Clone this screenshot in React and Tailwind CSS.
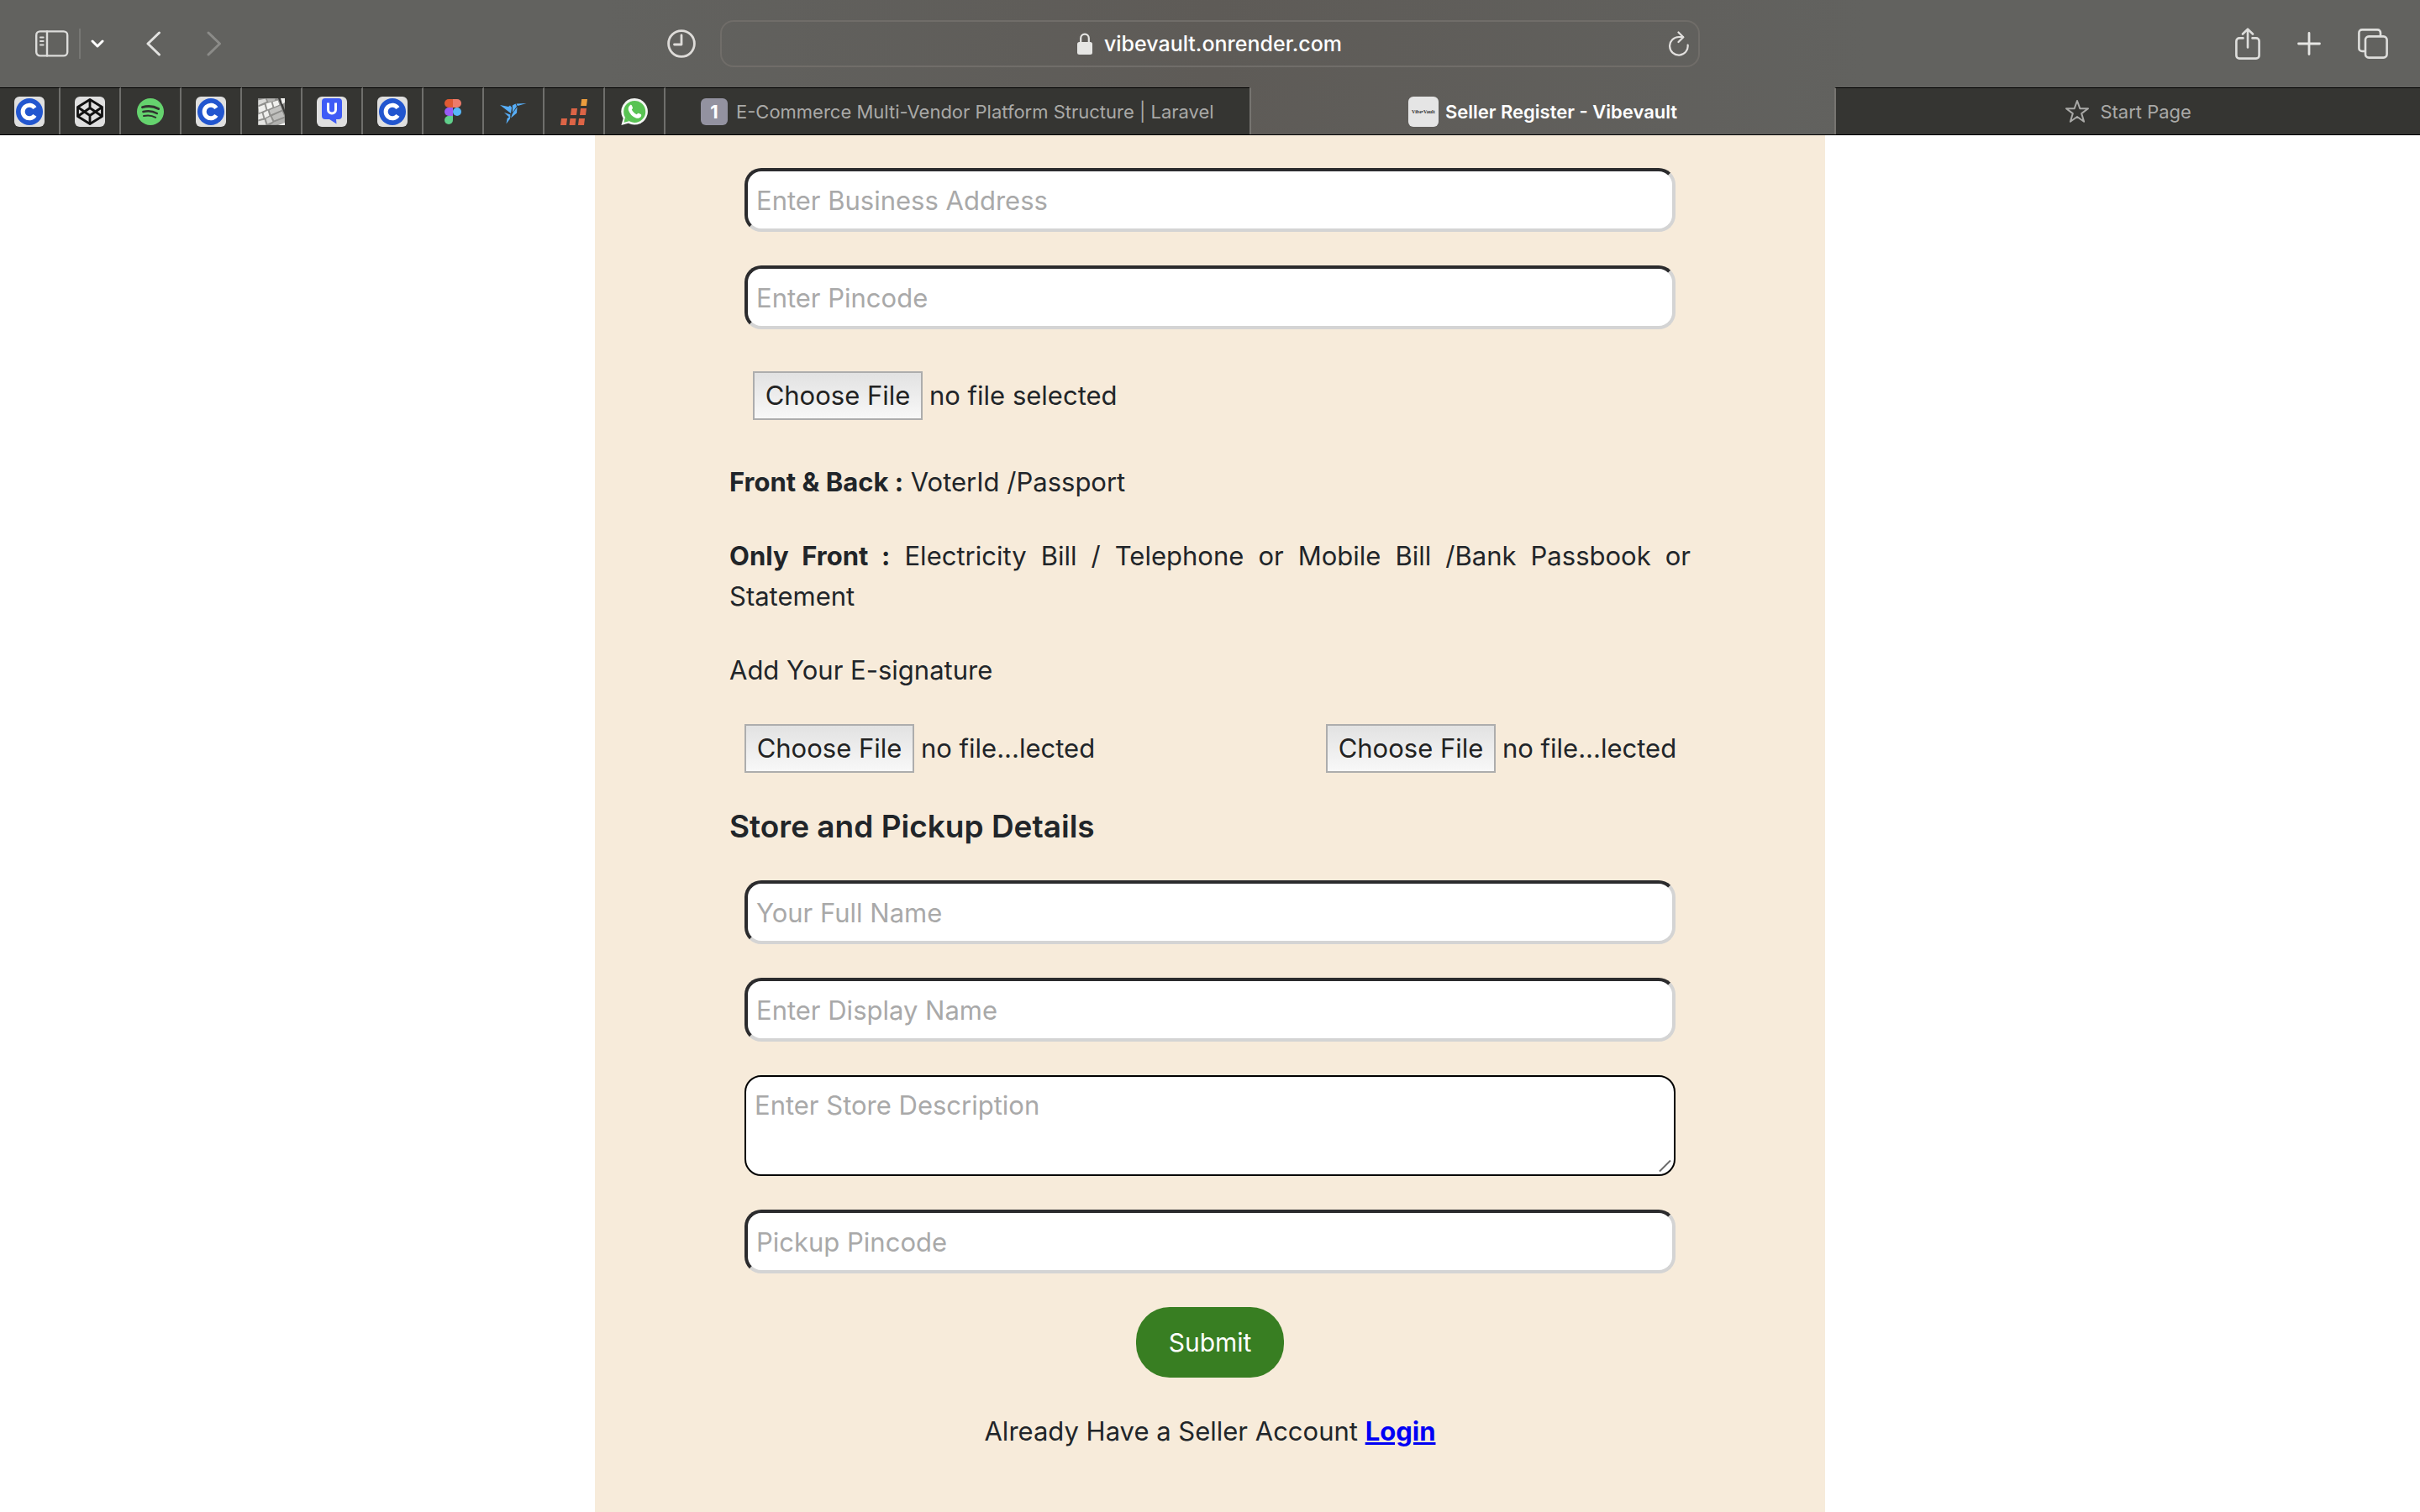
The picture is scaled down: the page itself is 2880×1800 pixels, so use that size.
import React from "react";

function CoinIcon() {
  return (
    <svg viewBox="0 0 36 36" className="size-9" aria-hidden="true">
      <rect width="36" height="36" rx="6" fill="#dfdfdf" />
      <circle cx="18" cy="18" r="16" fill="#2256cf" />
      <path d="M24.4 13.6A7.8 7.8 0 1 0 24.4 22.4" fill="none" stroke="#fff" strokeWidth="5" />
    </svg>
  );
}

function CodepenIcon() {
  return (
    <svg viewBox="0 0 36 36" className="size-9" aria-hidden="true">
      <rect width="36" height="36" rx="6" fill="#dfdfdf" />
      <g fill="none" stroke="#111" strokeWidth="2.8" strokeLinejoin="round">
        <path d="M18 3.5 32.5 12.5V23.5L18 32.5 3.5 23.5V12.5Z" />
        <path d="M3.5 12.5 18 22.5 32.5 12.5M3.5 23.5 18 13.5 32.5 23.5M18 3.5V13.5M18 22.5V32.5" />
      </g>
    </svg>
  );
}

function SpotifyIcon() {
  return (
    <svg viewBox="0 0 32 32" className="size-8" aria-hidden="true">
      <circle cx="16" cy="16" r="16" fill="#65d36e" />
      <g fill="none" stroke="#30332f" strokeLinecap="round">
        <path d="M6.5 10.6C13 8.8 20 9.4 25.6 12.5" strokeWidth="3" />
        <path d="M7.4 16C13 14.6 19 15.2 23.8 18" strokeWidth="2.5" />
        <path d="M8 21C13 19.9 18 20.4 22.2 22.8" strokeWidth="2" />
      </g>
    </svg>
  );
}

function KeyboardIcon() {
  return (
    <svg viewBox="0 0 32 32" className="size-8" aria-hidden="true">
      <rect width="32" height="32" fill="#8d8d8b" />
      <g stroke="#8a8a88" strokeWidth="0.8">
        <path d="M0 2 9 0 11 4 0 9Z" fill="#d9d9d7" />
        <path d="M10 0H21L20 4 12 5Z" fill="#b5b5b3" />
        <path d="M0 10 8 7 10 14 1 18Z" fill="#efefed" />
        <path d="M9 6 16 4 18 11 11 14Z" fill="#f4f4f2" />
        <path d="M17 4 24 2 26 8 19 11Z" fill="#f0f0ee" />
        <path d="M0 19 5 17 7 24 0 26Z" fill="#ececea" />
        <path d="M6 17 12 14 14 21 8 24Z" fill="#efefed" />
        <path d="M13 14 27 8 29 14 15 20Z" fill="#c2c2c0" />
        <path d="M0 27 8 25 10 32H0Z" fill="#e4e4e2" />
        <path d="M9 24 15 21 18 28 11 31Z" fill="#d2d2d0" />
        <path d="M16 21 29 15 32 22 19 27Z" fill="#bebebc" />
        <path d="M19 28 32 23V30L21 32H14Z" fill="#b0b0ae" />
      </g>
      <path d="M24 0H27L32 14V20Z" fill="#3a3a39" />
      <path d="M27 0H32V5L29 7Z" fill="#f2f2f0" />
      <path d="M24 32 32 29V32Z" fill="#f2f2f0" />
    </svg>
  );
}

function BubbleIcon() {
  return (
    <svg viewBox="0 0 36 36" className="size-9" aria-hidden="true">
      <rect width="36" height="36" rx="6" fill="#dfdfdf" />
      <path d="M10 2H26A4 4 0 0 1 30 6V23A4 4 0 0 1 26 27H23L23.5 32.5 15 27H10A4 4 0 0 1 6 23V6A4 4 0 0 1 10 2Z" fill="#3e5bf6" />
      <path d="M13.5 7.5V15.5A4.5 4.5 0 0 0 22.5 15.5V7.5" fill="none" stroke="#fff" strokeWidth="3" />
    </svg>
  );
}

function FigmaIcon() {
  return (
    <svg viewBox="0 0 20 30" className="h-[30px] w-5" aria-hidden="true">
      <path d="M5 0H10V10H5A5 5 0 0 1 5 0Z" fill="#e05a33" />
      <path d="M10 0H15A5 5 0 0 1 15 10H10Z" fill="#ee7b6a" />
      <path d="M5 10H10V20H5A5 5 0 0 1 5 10Z" fill="#985cf6" />
      <circle cx="15" cy="15" r="5" fill="#57b7f9" />
      <path d="M5 20H10V25A5 5 0 1 1 5 20Z" fill="#60cf8b" />
    </svg>
  );
}

function BirdIcon() {
  return (
    <svg viewBox="0 0 32 32" className="size-8" aria-hidden="true">
      <g fill="#57aef8">
        <path d="M0 8 10 10 12 8.5 14 11 13 18Z" />
        <path d="M5 17 12.5 19.5 11.5 23Z" />
        <path d="M14.8 8.6 18.5 6.5 20 9.5 15 17Z" />
        <path d="M19.5 6.5 31.5 6 22 8.8 20.8 9Z" />
        <path d="M20.5 10.2 20 17.5 13 23.5 14.8 18.6Z" />
        <path d="M12.6 21 11.8 24.8 7.4 30.5 8.6 24Z" />
      </g>
    </svg>
  );
}

function BlocksIcon() {
  return (
    <svg viewBox="0 0 32 32" className="size-8" aria-hidden="true">
      <path d="M25.2 1H32L31 9H24.2Z" fill="#eb9c3d" />
      <g fill="#dd6446">
        <path d="M13 12H20L19 20H12Z" />
        <path d="M24 12H31L30 20H23Z" />
        <path d="M1 24H8L7 32H0Z" />
        <path d="M11.5 24H18.5L17.5 32H10.5Z" />
        <path d="M22 24H29L28 32H21Z" />
      </g>
    </svg>
  );
}

function WhatsappIcon() {
  return (
    <svg viewBox="0 0 32 32" className="size-8" aria-hidden="true">
      <path d="M16.2 0A15.8 15.8 0 1 1 8.8 29.8L0.4 32 2.6 23.9A15.8 15.8 0 0 1 16.2 0Z" fill="#f3f5f2" />
      <circle cx="16.2" cy="15.9" r="13" fill="#59c353" />
      <path d="M3.6 28.8 5 22.5 9.5 27.2Z" fill="#59c353" />
      <path d="M10.8 8.2C11.5 7.6 12.5 7.7 12.9 8.5L14 11.2C14.3 11.9 13.2 13 12.8 13.5 14 16 16 18 18.8 19.2 19.4 18.6 20.3 17.4 20.9 17.7L23.6 19C24.6 19.6 24.2 21 23.6 22 22.4 23.6 20 24.2 17.8 23.4 13.6 22 10.4 18.6 9 14.6 8.3 12.2 9 9.6 10.8 8.2Z" fill="#fff" />
    </svg>
  );
}

const pinned = [
  ["Courses", CoinIcon],
  ["CodePen", CodepenIcon],
  ["Spotify", SpotifyIcon],
  ["Courses", CoinIcon],
  ["Typing", KeyboardIcon],
  ["Bubble", BubbleIcon],
  ["Courses", CoinIcon],
  ["Figma", FigmaIcon],
  ["Bird", BirdIcon],
  ["Blocks", BlocksIcon],
  ["WhatsApp", WhatsappIcon],
];

function Toolbar() {
  return (
    <div className="grid h-[104px] grid-cols-[1fr_1166px_1fr] items-center">
      <div className="flex items-center justify-between pr-[29px] pl-[42px]">
        <div className="flex items-center">
          <button type="button" aria-label="Sidebar">
            <svg viewBox="0 0 40 32" className="h-8 w-10" fill="none" stroke="#dcdcda" strokeWidth="2.4" strokeLinecap="round">
              <rect x="1.2" y="1.4" width="37" height="29" rx="4.5" />
              <path d="M14 1.4V30.4" />
              <path d="M6 8.5H9.6M6 13H9.6M6 17.5H9.6" strokeWidth="2" />
            </svg>
          </button>
          <span className="ml-3 h-9 w-0.5 bg-[#777774]" />
          <button type="button" aria-label="Sidebar menu" className="ml-3">
            <svg viewBox="0 0 16 10" className="h-2.5 w-4" fill="none" stroke="#fff" strokeWidth="3" strokeLinecap="round" strokeLinejoin="round">
              <path d="M2 2 8 8 14 2" />
            </svg>
          </button>
          <button type="button" aria-label="Back" className="ml-[50px]">
            <svg viewBox="0 0 18 30" className="h-[30px] w-[18px]" fill="none" stroke="#e2e2e0" strokeWidth="3" strokeLinecap="round" strokeLinejoin="round">
              <path d="M15.5 2 2 15 15.5 28" />
            </svg>
          </button>
          <button type="button" aria-label="Forward" className="ml-[54px]">
            <svg viewBox="0 0 18 30" className="h-[30px] w-[18px]" fill="none" stroke="#8b8b88" strokeWidth="3" strokeLinecap="round" strokeLinejoin="round">
              <path d="M2 2 15.5 15 2 28" />
            </svg>
          </button>
        </div>
        <button type="button" aria-label="History">
          <svg viewBox="0 0 34 34" className="size-[34px]" fill="none" stroke="#dedcd9" strokeWidth="2.8" strokeLinecap="round" strokeLinejoin="round">
            <circle cx="17" cy="17" r="15.4" />
            <path d="M17 7V18H8.5" />
          </svg>
        </button>
      </div>
      <div className="flex h-14 items-center rounded-2xl border-2 border-[#706d69] pr-[11px]">
        <span className="w-[34px]" />
        <div className="flex flex-1 items-center justify-center gap-[14px] text-[25px] leading-8 font-medium text-white">
          <svg viewBox="0 0 18 26" className="h-[26px] w-[18px]" aria-hidden="true">
            <path d="M4.2 12V6.5A4.8 4.8 0 0 1 13.8 6.5V12" fill="none" stroke="#e6e6e4" strokeWidth="2.2" />
            <rect y="11" width="18" height="15" rx="2.5" fill="#e6e6e4" />
          </svg>
          <span>vibevault.onrender.com</span>
        </div>
        <button type="button" aria-label="Reload">
          <svg viewBox="0 0 24 30" className="h-[30px] w-6" fill="none" stroke="#e2e0de" strokeWidth="2.2" strokeLinecap="round" strokeLinejoin="round">
            <path d="M22.6 16.5A10.8 10.8 0 1 1 12 7H17" />
            <path d="M11.5 1.5 17.3 7.2 11.5 13" />
          </svg>
        </button>
      </div>
      <div className="flex items-center justify-end pr-[38px]">
        <button type="button" aria-label="Share">
          <svg viewBox="0 0 30 38" className="h-[38px] w-[30px]" fill="none" stroke="#dededc" strokeWidth="2.6" strokeLinecap="round" strokeLinejoin="round">
            <path d="M9.5 12.4H5A3.6 3.6 0 0 0 1.4 16V33A3.6 3.6 0 0 0 5 36.6H25A3.6 3.6 0 0 0 28.6 33V16A3.6 3.6 0 0 0 25 12.4H20.5" />
            <path d="M15 23.5V1.8M9 7.5 15 1.6 21 7.5" />
          </svg>
        </button>
        <button type="button" aria-label="New tab" className="ml-11">
          <svg viewBox="0 0 28 28" className="size-7" fill="none" stroke="#e6e6e4" strokeWidth="2.8" strokeLinecap="round">
            <path d="M14 1.5V26.5M1.5 14H26.5" />
          </svg>
        </button>
        <button type="button" aria-label="Tab overview" className="ml-11">
          <svg viewBox="0 0 36 36" className="size-9" fill="none" stroke="#dededc" strokeWidth="2.6" strokeLinejoin="round">
            <rect x="9" y="9.4" width="25.6" height="25.2" rx="4" />
            <path d="M9 27H5A3.6 3.6 0 0 1 1.4 23.4V5A3.6 3.6 0 0 1 5 1.4H23.4A3.6 3.6 0 0 1 27 5V9.4" />
          </svg>
        </button>
      </div>
    </div>
  );
}

function TabBar() {
  return (
    <div className="flex h-14 text-[22px] leading-7">
      {pinned.map(([label, Icon], i) => (
        <button
          key={i}
          type="button"
          aria-label={label}
          className="flex w-[72px] shrink-0 items-center justify-center border-t border-r-2 border-t-black border-r-[#6f6f6c] bg-[#353532]"
        >
          <Icon />
        </button>
      ))}
      <button type="button" className="flex flex-1 items-center justify-center gap-2.5 border-t border-black bg-[#353532] text-[#a9a9a7]">
        <span className="flex size-8 items-center justify-center rounded-md bg-[#9392a0] font-bold text-white">1</span>
        <span>E-Commerce Multi-Vendor Platform Structure | Laravel</span>
      </button>
      <button type="button" className="flex flex-1 items-center justify-center gap-2 border-t border-l-2 border-t-transparent border-l-[#767470] font-semibold text-white">
        <span className="flex size-9 items-center justify-center rounded-md bg-[#e5e5e5] font-['Liberation_Serif',serif] text-[6px] leading-3 text-[#333]">
          Vibe•Vault
        </span>
        <span>Seller Register - Vibevault</span>
      </button>
      <button type="button" className="flex flex-1 items-center justify-center gap-3 border-t border-l-2 border-t-black border-l-[#767470] bg-[#353532] text-[#a9a9a7]">
        <svg viewBox="0 0 30 29" className="h-[29px] w-[30px]" fill="none" stroke="#a9a9a7" strokeWidth="2" strokeLinejoin="round" aria-hidden="true">
          <path d="M15 2 18.3 11.2H28L20.2 17.1 23.1 26.8 15 21 6.9 26.8 9.8 17.1 2 11.2H11.7Z" />
        </svg>
        <span>Start Page</span>
      </button>
    </div>
  );
}

function TextField({ label }) {
  return (
    <input
      type="text"
      aria-label={label}
      placeholder={label}
      className="mx-[18px] h-[76px] rounded-[20px] border-4 border-t-[#2b2b2d] border-r-[#d4d4d4] border-b-[#d4d4d4] border-l-[#2b2b2d] bg-white px-2.5 placeholder:text-[#a9a9a9]"
    />
  );
}

function FileField({ id, status }) {
  return (
    <div className="flex w-[416px] items-center gap-2 whitespace-nowrap">
      <input id={id} type="file" className="sr-only" />
      <label htmlFor={id} className="flex h-[58px] w-[202px] shrink-0 items-center justify-center border-2 border-[#adadad] bg-linear-to-b from-[#e2e2e2] to-[#f8f8f8] text-[#222]">
        Choose File
      </label>
      <span>{status}</span>
    </div>
  );
}

export default function App() {
  return (
    <div className="flex min-h-screen flex-col bg-white font-[Inter,'Liberation_Sans',sans-serif]">
      <header className="border-b border-black bg-linear-to-r from-[#62625f] from-25% via-[#5e5b57] via-50% to-[#62625f] to-77%">
        <Toolbar />
        <TabBar />
      </header>
      <main className="mx-auto w-full max-w-[1464px] flex-1 bg-[#f7ebda] px-[160px] pt-[39px] pb-[72px] text-[31px] leading-[48px] text-[#212529]">
        <form className="flex flex-col gap-10">
          <TextField label="Enter Business Address" />
          <TextField label="Enter Pincode" />
          <div className="mx-7 my-2.5">
            <FileField id="proof" status="no file selected" />
          </div>
          <p>
            <b>Front &amp; Back :</b> VoterId /Passport
          </p>
          <p className="text-justify">
            <b>Only Front :</b> Electricity Bill / Telephone or Mobile Bill /Bank Passbook or Statement
          </p>
          <p>Add Your E-signature</p>
          <div className="mx-[18px] flex justify-between">
            <FileField id="signature-front" status="no file...lected" />
            <FileField id="signature-back" status="no file...lected" />
          </div>
          <h2 className="text-[37px] font-semibold">Store and Pickup Details</h2>
          <TextField label="Your Full Name" />
          <TextField label="Enter Display Name" />
          <div className="relative mx-[18px] flex">
            <textarea
              aria-label="Enter Store Description"
              placeholder="Enter Store Description"
              className="h-[120px] w-full resize-none rounded-[20px] border-2 border-black bg-white px-2.5 py-2.5 placeholder:text-[#a9a9a9]"
            />
            <svg viewBox="0 0 16 16" className="absolute right-1 bottom-1 size-4" fill="none" stroke="#6b6b6b" strokeWidth="2" aria-hidden="true">
              <path d="M1 14.5 14 1.5" />
            </svg>
          </div>
          <TextField label="Pickup Pincode" />
          <button type="submit" className="h-[84px] w-[176px] self-center rounded-[40px] bg-[#387e22] text-[30px] text-white">
            Submit
          </button>
          <p className="text-center">
            Already Have a Seller Account{" "}
            <a href="#login" className="font-bold text-[#0000f5] underline">
              Login
            </a>
          </p>
        </form>
      </main>
    </div>
  );
}
